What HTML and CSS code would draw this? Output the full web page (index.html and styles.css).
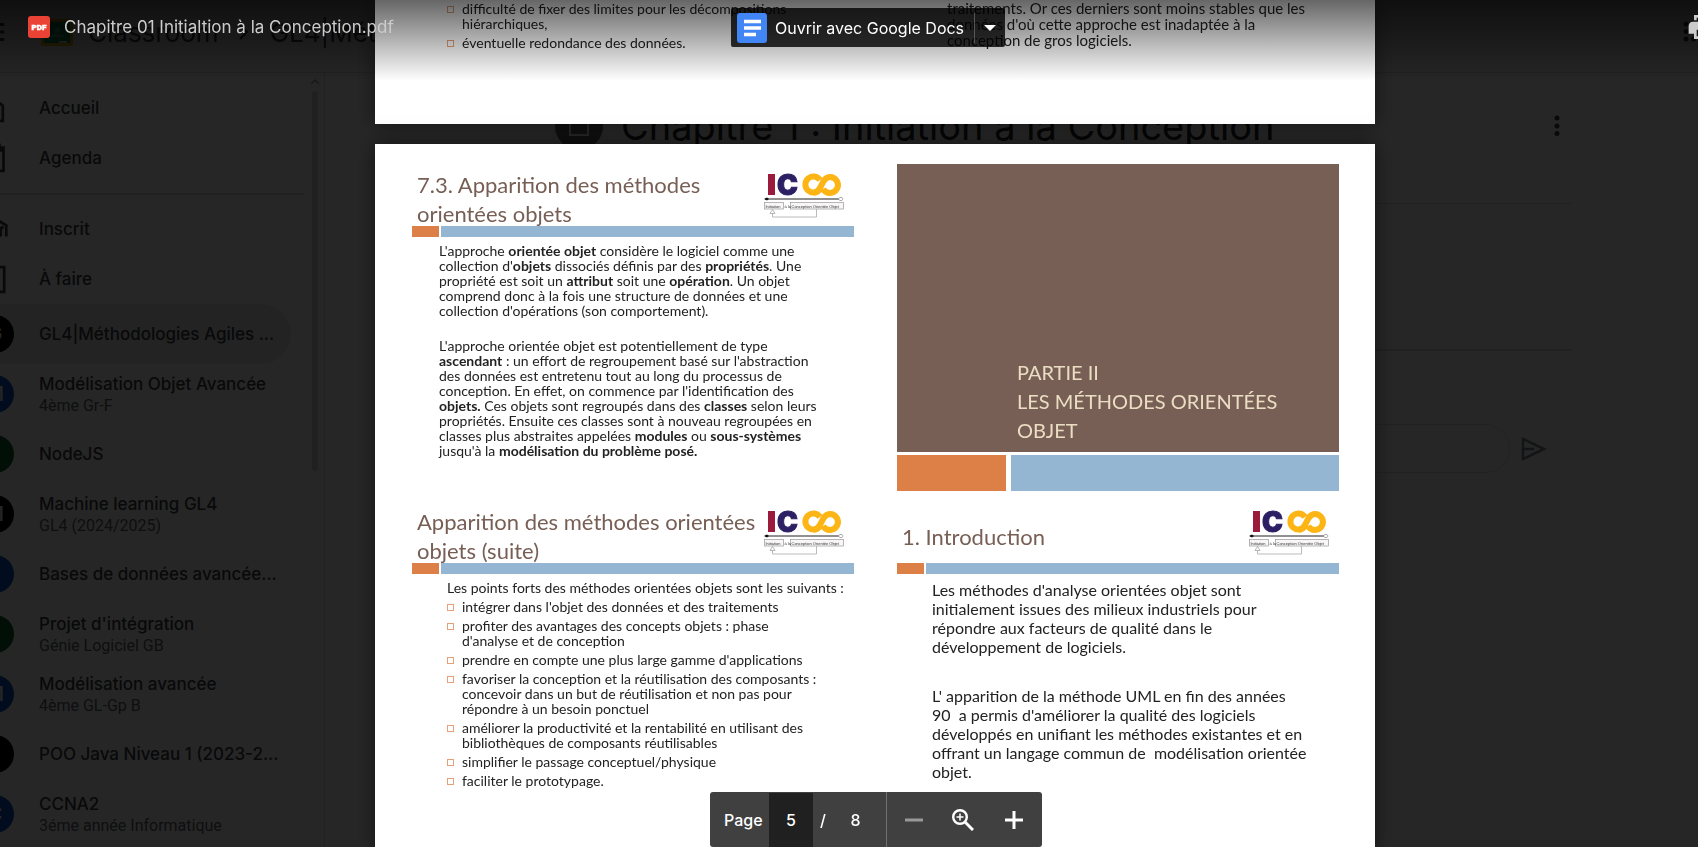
FILE: index.html
```html
<!DOCTYPE html>
<html lang="fr">
<head>
<meta charset="utf-8">
<meta name="viewport" content="width=device-width, initial-scale=1">
<title>Chapitre 01 Initialtion à la Conception.pdf</title>
<link rel="stylesheet" href="styles.css">
</head>
<body>
<svg class="defs" aria-hidden="true">
  <symbol id="icoo" viewBox="0 0 80 46">
    <rect x="4" y="2" width="7" height="21" fill="#9b1b3c"/>
    <text class="icoo-c" x="13" y="23">C</text>
    <g fill="none" stroke="#fdb515" stroke-width="6">
      <path d="M56 17a8 8 0 1 1 0-9"/>
      <path d="M50 20.500C58 20.500 57 5 66 5a8 8 0 1 1-7 12"/>
    </g>
    <path d="M1 27h75" stroke="#222" stroke-width="1"/>
    <path d="M0 27l3-1.500 2 1.500-2 1.500z" fill="#111"/>
    <path d="M74 27l2-1.500h2l1 1.500-1 1.500h-2z" fill="#fff" stroke="#777" stroke-width=".6"/>
    <rect x=".5" y="30.500" width="19" height="6.500" fill="#f8f6f6" stroke="#999" stroke-width=".7"/>
    <rect x="26.500" y="30.500" width="53" height="6.500" fill="#f8f6f6" stroke="#999" stroke-width=".7"/>
    <text class="icoo-t" x="1.500" y="35.500">Initiation</text>
    <text class="icoo-t" x="20.500" y="35.500">à la</text>
    <text class="icoo-t" x="27.500" y="35.500">Conception Orientée Objet</text>
    <path d="M8.500 41v4h44v-8" fill="none" stroke="#aaa" stroke-width=".8"/>
    <path d="M8.500 37.500l2.500 4h-5z" fill="#fff" stroke="#999" stroke-width=".7"/>
  </symbol>
</svg>

<div class="app">
  <header class="app-header">
    <button class="icon-btn menu" aria-label="Menu principal"><svg viewBox="0 0 24 24" width="30" height="30"><path d="M2 6h19M2 12h19M2 18h19" stroke="currentColor" stroke-width="2.400"/></svg></button>
    <svg class="brand-logo" viewBox="0 0 32 27" width="32" height="27"><rect width="32" height="27" rx="2" fill="#f5ba15"/><rect x="3" y="3" width="26" height="21" fill="#0f9d58"/><circle cx="16" cy="11" r="3" fill="#57bb8a"/><path d="M9 18c0-4 14-4 14 0z" fill="#57bb8a"/><path d="M18 22h8v2h-8z" fill="#eee"/></svg>
    <a class="crumb" href="#">Classroom</a>
    <svg class="chev" viewBox="0 0 24 24" width="24" height="24"><path d="M9 5l7 7-7 7" fill="none" stroke="currentColor" stroke-width="2"/></svg>
    <a class="crumb" href="#">GL4|Méthodologies Agiles</a>
    <svg class="apps" viewBox="0 0 24 24" width="24" height="24"><g fill="currentColor"><circle cx="4" cy="4" r="2.500"/><circle cx="4" cy="11.500" r="2.500"/><circle cx="4" cy="19" r="2.500"/><circle cx="11.500" cy="4" r="2.500"/><circle cx="11.500" cy="11.500" r="2.500"/><circle cx="11.500" cy="19" r="2.500"/></g></svg>
  </header>
  <div class="app-body">
    <nav class="side">
      <ul class="nav">
        <li><a class="row short" href="#"><svg class="nav-ico" viewBox="0 0 24 24"><path d="M4 10l8-6 7.500 6v11H4z"/></svg>Accueil</a></li>
        <li><a class="row short" href="#"><svg class="nav-ico" viewBox="0 0 24 24"><path d="M4 4h16v17H4zM4 6h16M17 1v4"/></svg>Agenda</a></li>
      </ul>
      <ul class="nav">
        <li><a class="row short" href="#"><svg class="nav-ico" viewBox="0 0 24 24"><path d="M2 9l10-6 10 6v8M12 15l8-5M18 10v6l-6 4"/></svg>Inscrit</a></li>
        <li><a class="row short" href="#"><svg class="nav-ico" viewBox="0 0 24 24"><path d="M3 3h17.500v18H3zM11 14l6-6"/></svg>À faire</a></li>
        <li><a class="row active" href="#"><span class="avatar black">G</span><span class="name">GL4|Méthodologies Agiles ...</span></a></li>
        <li><a class="row" href="#"><span class="avatar blue">M</span><span class="name">Modélisation Objet Avancée<small>4ème Gr-F</small></span></a></li>
        <li><a class="row" href="#"><span class="avatar green"></span><span class="name">NodeJS</span></a></li>
        <li><a class="row" href="#"><span class="avatar black">M</span><span class="name">Machine learning GL4<small>GL4 (2024/2025)</small></span></a></li>
        <li><a class="row" href="#"><span class="avatar blue"></span><span class="name">Bases de données avancée...</span></a></li>
        <li><a class="row" href="#"><span class="avatar green"></span><span class="name">Projet d'intégration<small>Génie Logiciel GB</small></span></a></li>
        <li><a class="row" href="#"><span class="avatar blue">M</span><span class="name">Modélisation avancée<small>4ème GL-Gp B</small></span></a></li>
        <li><a class="row" href="#"><span class="avatar black"></span><span class="name">POO Java Niveau 1 (2023-2...</span></a></li>
        <li><a class="row" href="#"><span class="avatar blue">C</span><span class="name">CCNA2<small>3éme année Informatique</small></span></a></li>
      </ul>
      <div class="scroll"><svg viewBox="0 0 8 6" width="8" height="6"><path d="M0 5l4-4 4 4" fill="none" stroke="currentColor" stroke-width="1.500"/></svg><span></span></div>
    </nav>
    <main class="content">
      <div class="post-head">
        <span class="post-ico"><svg viewBox="0 0 24 24" width="24" height="24"><path d="M3 3h18v18H3z" fill="none" stroke="#fff" stroke-width="2"/></svg></span>
        <h1>Chapitre 1 : Initiation à la Conception</h1>
        <button class="icon-btn" aria-label="Plus"><svg viewBox="0 0 6 22" width="6" height="22"><g fill="currentColor"><circle cx="3" cy="3" r="2.500"/><circle cx="3" cy="11" r="2.500"/><circle cx="3" cy="18.500" r="2.500"/></g></svg></button>
      </div>
      <div class="post-body"></div>
      <div class="comment">
        <input type="text" aria-label="Commentaire">
        <button class="icon-btn send" aria-label="Publier"><svg viewBox="0 0 26 24" width="26" height="24"><path d="M2 2l21 10L2 22zM2 12h11" fill="none" stroke="currentColor" stroke-width="2.500"/></svg></button>
      </div>
    </main>
  </div>
</div>

<div class="viewer">
  <div class="pages">
    <section class="page page-prev">
      <div class="slide-text list">
        <ul class="bullets">
          <li>difficulté de fixer des limites pour les décompositions<br>hiérarchiques,</li>
          <li>éventuelle redondance des données.</li>
        </ul>
      </div>
      <div class="slide-text aside">
        <p>traitements. Or ces derniers sont moins stables que les<br>données d'où cette approche est inadaptée à la<br>conception de gros logiciels.</p>
      </div>
    </section>

    <section class="page page-cur">
      <article class="slide">
        <header class="slide-head"><h2>7.3. Apparition des méthodes<br>orientées objets</h2><svg class="logo"><use href="#icoo"/></svg></header>
        <div class="rule"><i></i><b></b></div>
        <div class="slide-text body">
          <p>L'approche <strong>orientée objet</strong> considère le logiciel comme une<br>collection d'<strong>objets</strong> dissociés définis par des <strong>propriétés</strong>. Une<br>propriété est soit un <strong>attribut</strong> soit une <strong>opération</strong>. Un objet<br>comprend donc à la fois une structure de données et une<br>collection d'opérations (son comportement).</p>
          <p>L'approche orientée objet est potentiellement de type<br><strong>ascendant</strong> : un effort de regroupement basé sur l'abstraction<br>des données est entretenu tout au long du processus de<br>conception. En effet, on commence par l'identification des<br><strong>objets.</strong> Ces objets sont regroupés dans des <strong>classes</strong> selon leurs<br>propriétés. Ensuite ces classes sont à nouveau regroupées en<br>classes plus abstraites appelées <strong>modules</strong> ou <strong>sous-systèmes</strong><br>jusqu'à la <strong>modélisation du problème posé.</strong></p>
        </div>
      </article>

      <article class="slide">
        <div class="cover"><h2>PARTIE II<br>LES MÉTHODES ORIENTÉES<br>OBJET</h2></div>
        <div class="rule thick"><i></i><b></b></div>
      </article>

      <article class="slide">
        <header class="slide-head"><h2>Apparition des méthodes orientées<br>objets (suite)</h2><svg class="logo"><use href="#icoo"/></svg></header>
        <div class="rule"><i></i><b></b></div>
        <div class="slide-text list">
          <p>Les points forts des méthodes orientées objets sont les suivants :</p>
          <ul class="bullets">
            <li>intégrer dans l'objet des données et des traitements</li>
            <li>profiter des avantages des concepts objets : phase<br>d'analyse et de conception</li>
            <li>prendre en compte une plus large gamme d'applications</li>
            <li>favoriser la conception et la réutilisation des composants :<br>concevoir dans un but de réutilisation et non pas pour<br>répondre à un besoin ponctuel</li>
            <li>améliorer la productivité et la rentabilité en utilisant des<br>bibliothèques de composants réutilisables</li>
            <li>simplifier le passage conceptuel/physique</li>
            <li>faciliter le prototypage.</li>
          </ul>
        </div>
      </article>

      <article class="slide">
        <header class="slide-head"><h2>1. Introduction</h2><svg class="logo"><use href="#icoo"/></svg></header>
        <div class="rule"><i></i><b></b></div>
        <div class="slide-text large">
          <p>Les méthodes d'analyse orientées objet sont<br>initialement issues des milieux industriels pour<br>répondre aux facteurs de qualité dans le<br>développement de logiciels.</p>
          <p>L' apparition de la méthode UML en fin des années<br>90&nbsp; a permis d'améliorer la qualité des logiciels<br>développés en unifiant les méthodes existantes et en<br>offrant un langage commun de&nbsp; modélisation orientée<br>objet.</p>
        </div>
      </article>
    </section>
  </div>

  <div class="topbar">
    <div class="file">
      <svg viewBox="0 0 22 22" width="22" height="22"><rect width="22" height="22" rx="3" fill="#ea4335"/><text class="pdf" x="11" y="14">PDF</text></svg>
      <span>Chapitre 01 Initialtion à la Conception.pdf</span>
    </div>
    <div class="open-with">
      <button class="open"><svg viewBox="0 0 30 30" width="30" height="30"><rect width="30" height="30" rx="3" fill="#4285f4"/><path d="M7 8.500h17M7 15h17M7 21.500h12" stroke="#fff" stroke-width="3.500"/></svg>Ouvrir avec Google Docs</button>
      <button class="more" aria-label="Autres applications"><svg viewBox="0 0 12 6" width="12" height="6"><path d="M0 0h12L6 6z" fill="#fff"/></svg></button>
    </div>
    <button class="icon-btn print" aria-label="Imprimer"><svg viewBox="0 0 24 24" width="32" height="32"><path fill="currentColor" fill-rule="evenodd" d="M19 8H5c-1.660 0-3 1.340-3 3v6h4v4h12v-4h4v-6c0-1.660-1.340-3-3-3zm-3 11H8v-5h8v5zM18 3H6v4h12V3zM8 5h8v2H8z"/></svg></button>
  </div>

  <div class="pager">
    <label for="page">Page</label>
    <input id="page" type="text" value="5">
    <span class="slash">/</span>
    <span class="total">8</span>
    <button class="zoom-out" aria-label="Zoom arrière"><svg viewBox="0 0 18 18" width="18" height="18"><path d="M0 9h18" stroke="currentColor" stroke-width="3"/></svg></button>
    <button class="fit" aria-label="Ajuster"><svg viewBox="0 0 22 22" width="22" height="22"><g fill="none" stroke="currentColor"><circle cx="8" cy="8" r="6.800" stroke-width="2.400"/><path d="M13 13l8 8" stroke-width="3"/><path d="M4.500 8h7M8 4.500v7" stroke-width="1.500"/></g></svg></button>
    <button class="zoom-in" aria-label="Zoom avant"><svg viewBox="0 0 18 18" width="18" height="18"><path d="M0 9h18M9 0v18" stroke="currentColor" stroke-width="3"/></svg></button>
  </div>
</div>
</body>
</html>
```

FILE: styles.css
```css
*, *::before { box-sizing: border-box; }
html, body { height: 100%; }
body {
  margin: 0;
  overflow: hidden;
  background: #fff;
  color: #3c4043;
  font-family: Inter, "Open Sans", sans-serif;
}
h1, h2, p, ul { margin: 0; padding: 0; font-weight: 400; }
ul { list-style: none; }
a { color: inherit; text-decoration: none; }
button { margin: 0; padding: 0; border: 0; background: none; color: inherit; font: inherit; }
input { font: inherit; color: inherit; }
svg { display: block; flex: none; }
.defs { position: absolute; width: 0; height: 0; }

/* Classroom, under the viewer */
.app { height: 100vh; display: flex; flex-direction: column; overflow: hidden; }
.app-header {
  display: flex;
  align-items: center;
  height: 73px;
  padding-bottom: 8px;
  border-bottom: 1px solid #dadce0;
  font-size: 26px;
}
.menu { margin-left: -22px; }
.brand-logo { margin-left: 33px; }
.crumb { margin-left: 15px; white-space: nowrap; }
.chev { margin-left: 12px; }
.apps { margin-left: auto; margin-right: -8px; }
.app-body { flex: 1; display: flex; min-height: 0; }
.side { position: relative; width: 325px; border-right: 1px solid #dadce0; padding-top: 10px; }
.nav { font-size: 17px; font-weight: 500; }
.nav + .nav { margin-top: 10px; padding-top: 10px; }
.nav + .nav::before { content: ""; display: block; width: 305px; margin: -10px 0 9px; border-top: 2px solid #dadce0; }
.row {
  display: flex;
  align-items: center;
  gap: 25px;
  height: 60px;
  width: 315px;
  margin-left: -24px;
  white-space: nowrap;
}
.short { height: 50px; gap: 30px; }
.active { border-radius: 0 30px 30px 0; background: #e8eaed; }
.nav-ico { width: 33px; height: 33px; fill: none; stroke: currentColor; stroke-width: 2; }
.avatar {
  display: grid;
  place-items: center;
  width: 38px;
  height: 38px;
  border-radius: 50%;
  color: #fff;
  font-size: 20px;
}
.black { background: #000; }
.blue { background: #1255cc; }
.green { background: #0d652d; }
.name { line-height: 24px; }
.name small { display: block; font: 400 16px/20px Roboto, sans-serif; color: #5f6368; }
.scroll {
  position: absolute;
  top: 6px;
  right: 6px;
  width: 6px;
  display: flex;
  flex-direction: column;
  align-items: center;
  gap: 6px;
  color: #9aa0a6;
}
.scroll span { width: 6px; height: 380px; border-radius: 3px; background: #d5d7da; }
.content { flex: 1; padding: 23px 126px 0 230px; }
.post-head {
  display: flex;
  align-items: center;
  height: 108px;
  padding: 0 12px 48px 0;
  border-bottom: 1px solid #dadce0;
}
.post-ico { display: grid; place-items: center; width: 48px; height: 48px; border-radius: 50%; background: #5f6368; }
.post-head h1 { flex: 1; margin-left: 18px; color: #202124; font-size: 38px; white-space: nowrap; }
.post-body { height: 147px; border-bottom: 2px solid #dadce0; }
.comment { display: flex; align-items: center; padding: 73px 25px 0 0; }
.comment input { flex: 1; height: 49px; border: 1px solid #dadce0; border-radius: 25px; background: #fff; }
.send { margin-left: 11px; color: #80868b; }

/* Document viewer */
.viewer { position: fixed; inset: 0; overflow: hidden; background: rgba(0, 0, 0, .85); }
.pages { display: flex; flex-direction: column; align-items: center; gap: 20px; padding-left: 52px; }
.page {
  display: grid;
  grid-template-columns: 1fr 1fr;
  column-gap: 43px;
  width: 1000px;
  max-width: 100%;
  background: #fff;
  color: #222;
  box-shadow: 0 0 20px rgba(0, 0, 0, .5);
  font-family: Lato, sans-serif;
}
.page-prev { padding: 0 36px 74px 37px; }
.page-cur { padding: 20px 36px 18px 37px; row-gap: 5px; }
.slide { display: flex; flex-direction: column; min-height: 332px; min-width: 0; }
.slide-head { display: flex; justify-content: space-between; align-items: center; height: 62px; padding: 0 10px 0 5px; }
.slide-head h2 { padding-top: 8px; color: #775f55; font-size: 22px; line-height: 29px; white-space: nowrap; }
.logo { width: 80px; height: 46px; }
.icoo-c { fill: #2d1f63; stroke: #2d1f63; stroke-width: 1; font: 900 28px Inter, sans-serif; }
.icoo-t { fill: #333; font: 400 4px "Liberation Sans", sans-serif; }
.rule { display: grid; grid-template-columns: 27px 1fr; gap: 2px; height: 11px; }
.rule i { background: #dd8047; }
.rule b { background: #94b6d2; }
.thick { grid-template-columns: 109px 1fr; gap: 5px; height: 36px; margin-top: 3px; }
.cover {
  flex: none;
  display: flex;
  align-items: flex-end;
  height: 288px;
  padding: 0 0 7px 120px;
  background: #775f55;
}
.cover h2 { color: #ebddc3; font-size: 20px; line-height: 29px; white-space: nowrap; }
.slide-text { font-size: 14px; line-height: 15px; white-space: nowrap; }
.body { padding: 6px 0 0 27px; }
.body p + p { margin-top: 20px; }
.list { padding: 6px 0 0 35px; }
.bullets li { position: relative; margin-top: 4px; padding-left: 15px; }
.bullets li::before { content: ""; position: absolute; left: 0; top: 5px; width: 7px; height: 7px; border: 1px solid #e5a078; }
.large { padding: 6px 0 0 35px; font-size: 16px; line-height: 19px; }
.large p + p { margin-top: 30px; }
.page-prev .list { padding-top: 0; }
.page-prev .bullets li:first-child { margin-top: 1px; }
.aside { padding-left: 50px; font-size: 15px; line-height: 16px; }

.topbar {
  position: absolute;
  inset: 0 0 auto;
  display: grid;
  grid-template-columns: 1fr auto 1fr;
  align-items: start;
  height: 81px;
  padding: 8px 0 0 38px;
  background: linear-gradient(rgba(0, 0, 0, .6), rgba(0, 0, 0, 0));
}
.file { display: flex; align-items: center; gap: 14px; height: 38px; margin-left: -10px; color: #ccc; font-size: 17px; white-space: nowrap; }
.pdf { fill: #fff; stroke: #fff; stroke-width: .5; font: 900 8px Roboto, sans-serif; text-anchor: middle; }
.open-with {
  display: flex;
  align-items: center;
  height: 39px;
  border-radius: 2px;
  background: rgba(0, 0, 0, .8);
  color: #fff;
  font-size: 16px;
}
.open { display: flex; align-items: center; gap: 8px; padding: 0 10px 0 6px; white-space: nowrap; }
.more { display: grid; place-items: center; width: 31px; height: 30px; border-left: 1px solid #555; }
.print { justify-self: end; margin: 3px -20px 0 0; color: #ccc; }

.pager {
  position: absolute;
  left: 50%;
  bottom: 0;
  margin-left: -139px;
  display: flex;
  align-items: center;
  height: 55px;
  border-radius: 3px;
  background: #404040;
  color: #fff;
  font-size: 16px;
  font-weight: 500;
}
.pager label { width: 59px; padding-left: 14px; }
.pager input { width: 44px; height: 54px; padding: 0; border: 0; background: #202020; text-align: center; }
.slash { width: 20px; text-align: center; }
.total { width: 53px; padding-right: 8px; text-align: center; }
.pager button { display: grid; place-items: center; height: 55px; }
.pager .zoom-out { width: 55px; border-left: 1px solid #707070; color: #999; }
.pager .fit { width: 44px; }
.pager .zoom-in { width: 57px; }
```
